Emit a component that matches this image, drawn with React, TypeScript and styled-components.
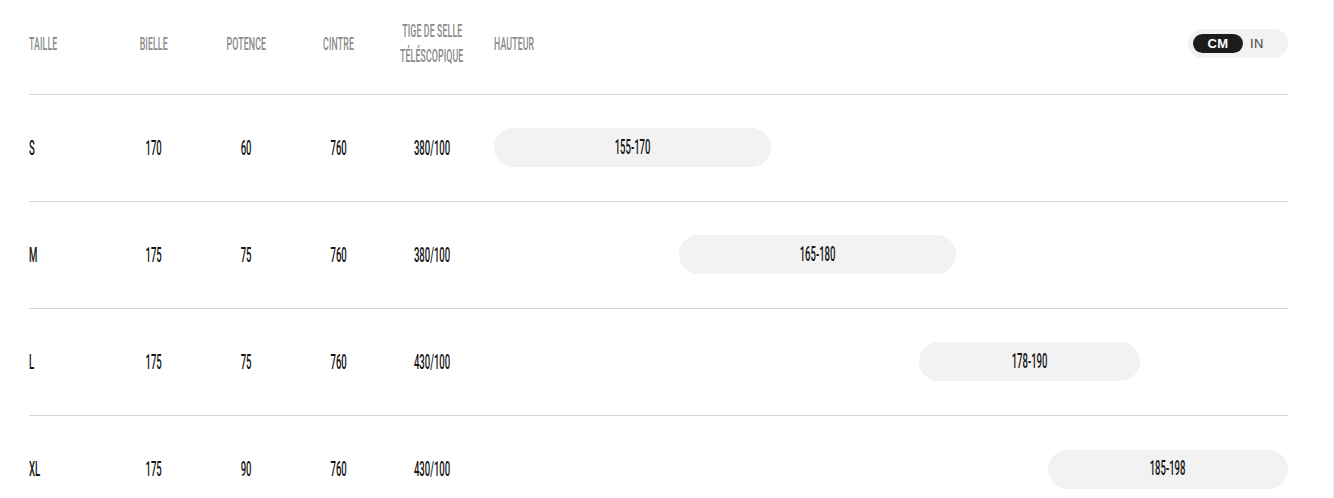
import React, { useState } from "react";
import styled, { createGlobalStyle } from "styled-components";

const Global = createGlobalStyle`
  html, body { margin: 0; padding: 0; background: #fff; }
  body { font-family: Roboto, "Liberation Sans", sans-serif; }
  #root { overflow: hidden; }
`;

const Page = styled.div`
  box-sizing: border-box;
  width: 1334px;
  height: 498px;
  padding: 0 45px 0 29px;
  border-right: 1px solid #ececec;
  overflow: hidden;
`;

const Grid = styled.div`
  display: grid;
  grid-template-columns: 110px 87px 97px 77px 94px 1fr;
`;

const HeaderRow = styled(Grid)`
  height: 95px;
  box-sizing: border-box;
  padding-bottom: 8px;
  align-items: center;
  border-bottom: 1px solid #d6d6d6;
`;

const Row = styled(Grid)<{ $last?: boolean }>`
  height: 107px;
  box-sizing: border-box;
  padding-top: 1px;
  align-items: center;
  border-bottom: ${(p) => (p.$last ? "none" : "1px solid #d6d6d6")};
`;

const Cell = styled.div<{ $w?: number }>`
  display: flex;
  flex-direction: column;
  align-items: ${(p) => (p.$w ? "center" : "flex-start")};
  width: ${(p) => (p.$w ? `${p.$w}px` : "auto")};
  white-space: nowrap;
`;

const Condensed = styled.span<{ $left?: boolean }>`
  display: inline-block;
  transform: scaleX(0.49);
  transform-origin: ${(p) => (p.$left ? "left center" : "center center")};
`;

const HeadText = styled(Condensed)`
  font-family: Roboto, "Liberation Sans", sans-serif;
  font-weight: 500;
  font-size: 18px;
  line-height: 25px;
  color: #8a8a8a;
  letter-spacing: 0.2px;
`;

const ValueText = styled(Condensed)`
  font-family: Roboto, "Liberation Sans", sans-serif;
  font-weight: 500;
  font-size: 19.5px;
  line-height: 24px;
  color: #141414;
`;

const HeightCell = styled.div`
  display: flex;
  align-items: center;
  justify-content: space-between;
`;

const Track = styled.div`
  position: relative;
  height: 39px;
`;

const Bar = styled.div`
  position: absolute;
  top: -1px;
  height: 39px;
  border-radius: 20px;
  background: #f2f2f2;
  display: flex;
  align-items: center;
  justify-content: center;
`;

const Toggle = styled.div`
  display: flex;
  align-items: center;
  height: 29px;
  width: 100px;
  box-sizing: border-box;
  padding: 0 5px;
  border-radius: 15px;
  background: #f2f2f2;
`;

const ToggleBtn = styled.button<{ $active?: boolean }>`
  border: none;
  cursor: pointer;
  height: 19px;
  width: ${(p) => (p.$active ? "50px" : "auto")};
  padding: ${(p) => (p.$active ? "0" : "0 0 0 7px")};
  border-radius: 10px;
  background: ${(p) => (p.$active ? "#1c1c1c" : "transparent")};
  color: ${(p) => (p.$active ? "#fff" : "#444")};
  font-family: "Liberation Sans", Arial, sans-serif;
  font-weight: ${(p) => (p.$active ? 700 : 400)};
  font-size: 13px;
  letter-spacing: 0.3px;
  line-height: 19px;
`;

const MIN = 155;
const MAX = 198;

type Size = {
  taille: string;
  bielle: string;
  potence: string;
  cintre: string;
  tige: string;
  from: number;
  to: number;
};

const sizes: Size[] = [
  { taille: "S", bielle: "170", potence: "60", cintre: "760", tige: "380/100", from: 155, to: 170 },
  { taille: "M", bielle: "175", potence: "75", cintre: "760", tige: "380/100", from: 165, to: 180 },
  { taille: "L", bielle: "175", potence: "75", cintre: "760", tige: "430/100", from: 178, to: 190 },
  { taille: "XL", bielle: "175", potence: "90", cintre: "760", tige: "430/100", from: 185, to: 198 },
];

const widths = { bielle: 29, potence: 40, cintre: 32, tige: 64 };

export default function App() {
  const [unit, setUnit] = useState<"cm" | "in">("cm");
  return (
    <>
      <Global />
      <Page>
        <HeaderRow>
          <Cell><HeadText $left>TAILLE</HeadText></Cell>
          <Cell $w={widths.bielle}><HeadText>BIELLE</HeadText></Cell>
          <Cell $w={widths.potence}><HeadText>POTENCE</HeadText></Cell>
          <Cell $w={widths.cintre}><HeadText>CINTRE</HeadText></Cell>
          <Cell $w={widths.tige}>
            <HeadText>TIGE DE SELLE</HeadText>
            <HeadText>TÉLÉSCOPIQUE</HeadText>
          </Cell>
          <HeightCell>
            <Cell><HeadText $left>HAUTEUR</HeadText></Cell>
            <Toggle>
              <ToggleBtn $active={unit === "cm"} onClick={() => setUnit("cm")}>CM</ToggleBtn>
              <ToggleBtn $active={unit === "in"} onClick={() => setUnit("in")}>IN</ToggleBtn>
            </Toggle>
          </HeightCell>
        </HeaderRow>
        {sizes.map((s, i) => (
          <Row key={s.taille} $last={i === sizes.length - 1}>
            <Cell><ValueText $left>{s.taille}</ValueText></Cell>
            <Cell $w={widths.bielle}><ValueText>{s.bielle}</ValueText></Cell>
            <Cell $w={widths.potence}><ValueText>{s.potence}</ValueText></Cell>
            <Cell $w={widths.cintre}><ValueText>{s.cintre}</ValueText></Cell>
            <Cell $w={widths.tige}><ValueText>{s.tige}</ValueText></Cell>
            <Track>
              <Bar
                style={{
                  left: `${((s.from - MIN) / (MAX - MIN)) * 100}%`,
                  width: `${((s.to - s.from) / (MAX - MIN)) * 100}%`,
                }}
              >
                <ValueText>{`${s.from}-${s.to}`}</ValueText>
              </Bar>
            </Track>
          </Row>
        ))}
      </Page>
    </>
  );
}
